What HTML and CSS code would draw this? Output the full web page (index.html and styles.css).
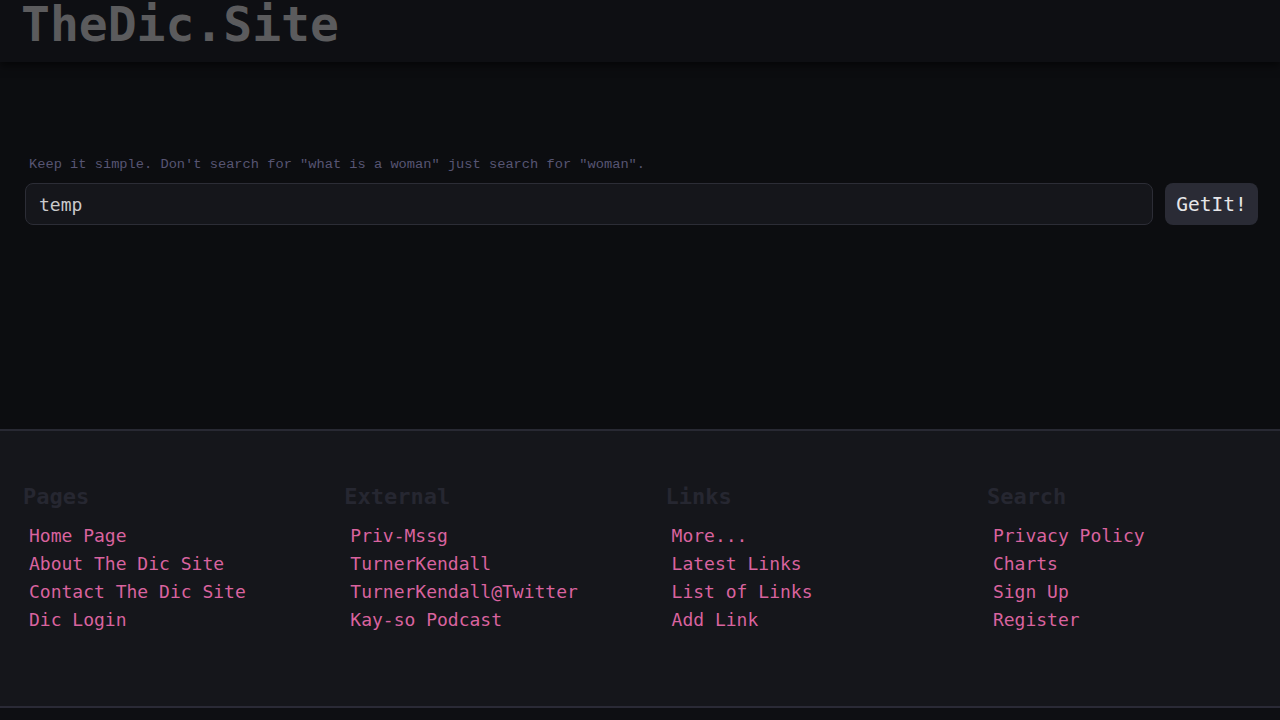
FILE: index.html
```html
<!DOCTYPE html>
<html lang="en">
<head>
<meta charset="utf-8">
<title>TheDic.Site</title>
<link rel="stylesheet" href="styles.css">
</head>
<body>
<header class="site-header">
  <h1 class="logo">TheDic.Site</h1>
</header>
<main class="main">
  <p class="hint">Keep it simple. Don't search for "what is a woman" just search for "woman".</p>
  <form class="search">
    <input class="search-input" type="text" value="temp">
    <button class="search-btn" type="button">GetIt!</button>
  </form>
</main>
<footer class="footer">
  <div class="cols">
    <div class="col">
      <h2 class="col-title">Pages</h2>
      <ul class="links">
        <li><a href="#">Home Page</a></li>
        <li><a href="#">About The Dic Site</a></li>
        <li><a href="#">Contact The Dic Site</a></li>
        <li><a href="#">Dic Login</a></li>
      </ul>
    </div>
    <div class="col">
      <h2 class="col-title">External</h2>
      <ul class="links">
        <li><a href="#">Priv-Mssg</a></li>
        <li><a href="#">TurnerKendall</a></li>
        <li><a href="#">TurnerKendall@Twitter</a></li>
        <li><a href="#">Kay-so Podcast</a></li>
      </ul>
    </div>
    <div class="col">
      <h2 class="col-title">Links</h2>
      <ul class="links">
        <li><a href="#">More...</a></li>
        <li><a href="#">Latest Links</a></li>
        <li><a href="#">List of Links</a></li>
        <li><a href="#">Add Link</a></li>
      </ul>
    </div>
    <div class="col">
      <h2 class="col-title">Search</h2>
      <ul class="links">
        <li><a href="#">Privacy Policy</a></li>
        <li><a href="#">Charts</a></li>
        <li><a href="#">Sign Up</a></li>
        <li><a href="#">Register</a></li>
      </ul>
    </div>
  </div>
</footer>
<div class="bottom"></div>
</body>
</html>
```
FILE: styles.css
```css
* { box-sizing: border-box; }
html, body { margin: 0; padding: 0; }
body {
  background: #0c0d10;
  font-family: "DejaVu Sans Mono", monospace;
  overflow: hidden;
}
.site-header {
  height: 62px;
  background: #0e0f13;
  box-shadow: 0 4px 8px rgba(0,0,0,0.55);
  padding-left: 21px;
  position: relative;
  z-index: 1;
}
.logo {
  margin: 0;
  font-size: 48px;
  line-height: 48px;
  font-weight: bold;
  color: #5b5b5d;
}
.main {
  height: 367px;
  padding: 94px 22px 0 25px;
}
.hint {
  margin: 0 0 9px 4px;
  font-family: "Liberation Mono", monospace;
  font-size: 13.7px;
  line-height: 18px;
  color: #575573;
}
.search {
  display: flex;
  gap: 12px;
  margin: 0;
}
.search-input {
  flex: 1;
  height: 42px;
  background: #15161b;
  border: 1.5px solid #2c2d36;
  border-radius: 8px;
  padding: 0 13px;
  font-family: "DejaVu Sans Mono", monospace;
  font-size: 18px;
  color: #c9c9cb;
  outline: none;
}
.search-btn {
  height: 42px;
  width: 93px;
  background: #2a2b35;
  border: none;
  border-radius: 8px;
  font-family: "DejaVu Sans Mono", monospace;
  font-size: 19.5px;
  color: #e6e6e8;
  padding: 0;
}
.footer {
  background: #15161b;
  border-top: 2px solid #282933;
  height: 279px;
  padding: 53px 0 0 23px;
  border-bottom: 2px solid #2a2a36;
}
.cols {
  display: grid;
  grid-template-columns: repeat(4, 321.3px);
}
.col-title {
  margin: 0 0 12px;
  font-size: 22px;
  line-height: 26px;
  font-weight: bold;
  color: #262731;
}
.links {
  list-style: none;
  margin: 0;
  padding: 0 0 0 6px;
}
.links li {
  height: 28px;
  line-height: 28px;
}
.links a {
  font-size: 18px;
  color: #d9639f;
  text-decoration: none;
}
.bottom {
  height: 20px;
  background: #0e0f13;
}
```
